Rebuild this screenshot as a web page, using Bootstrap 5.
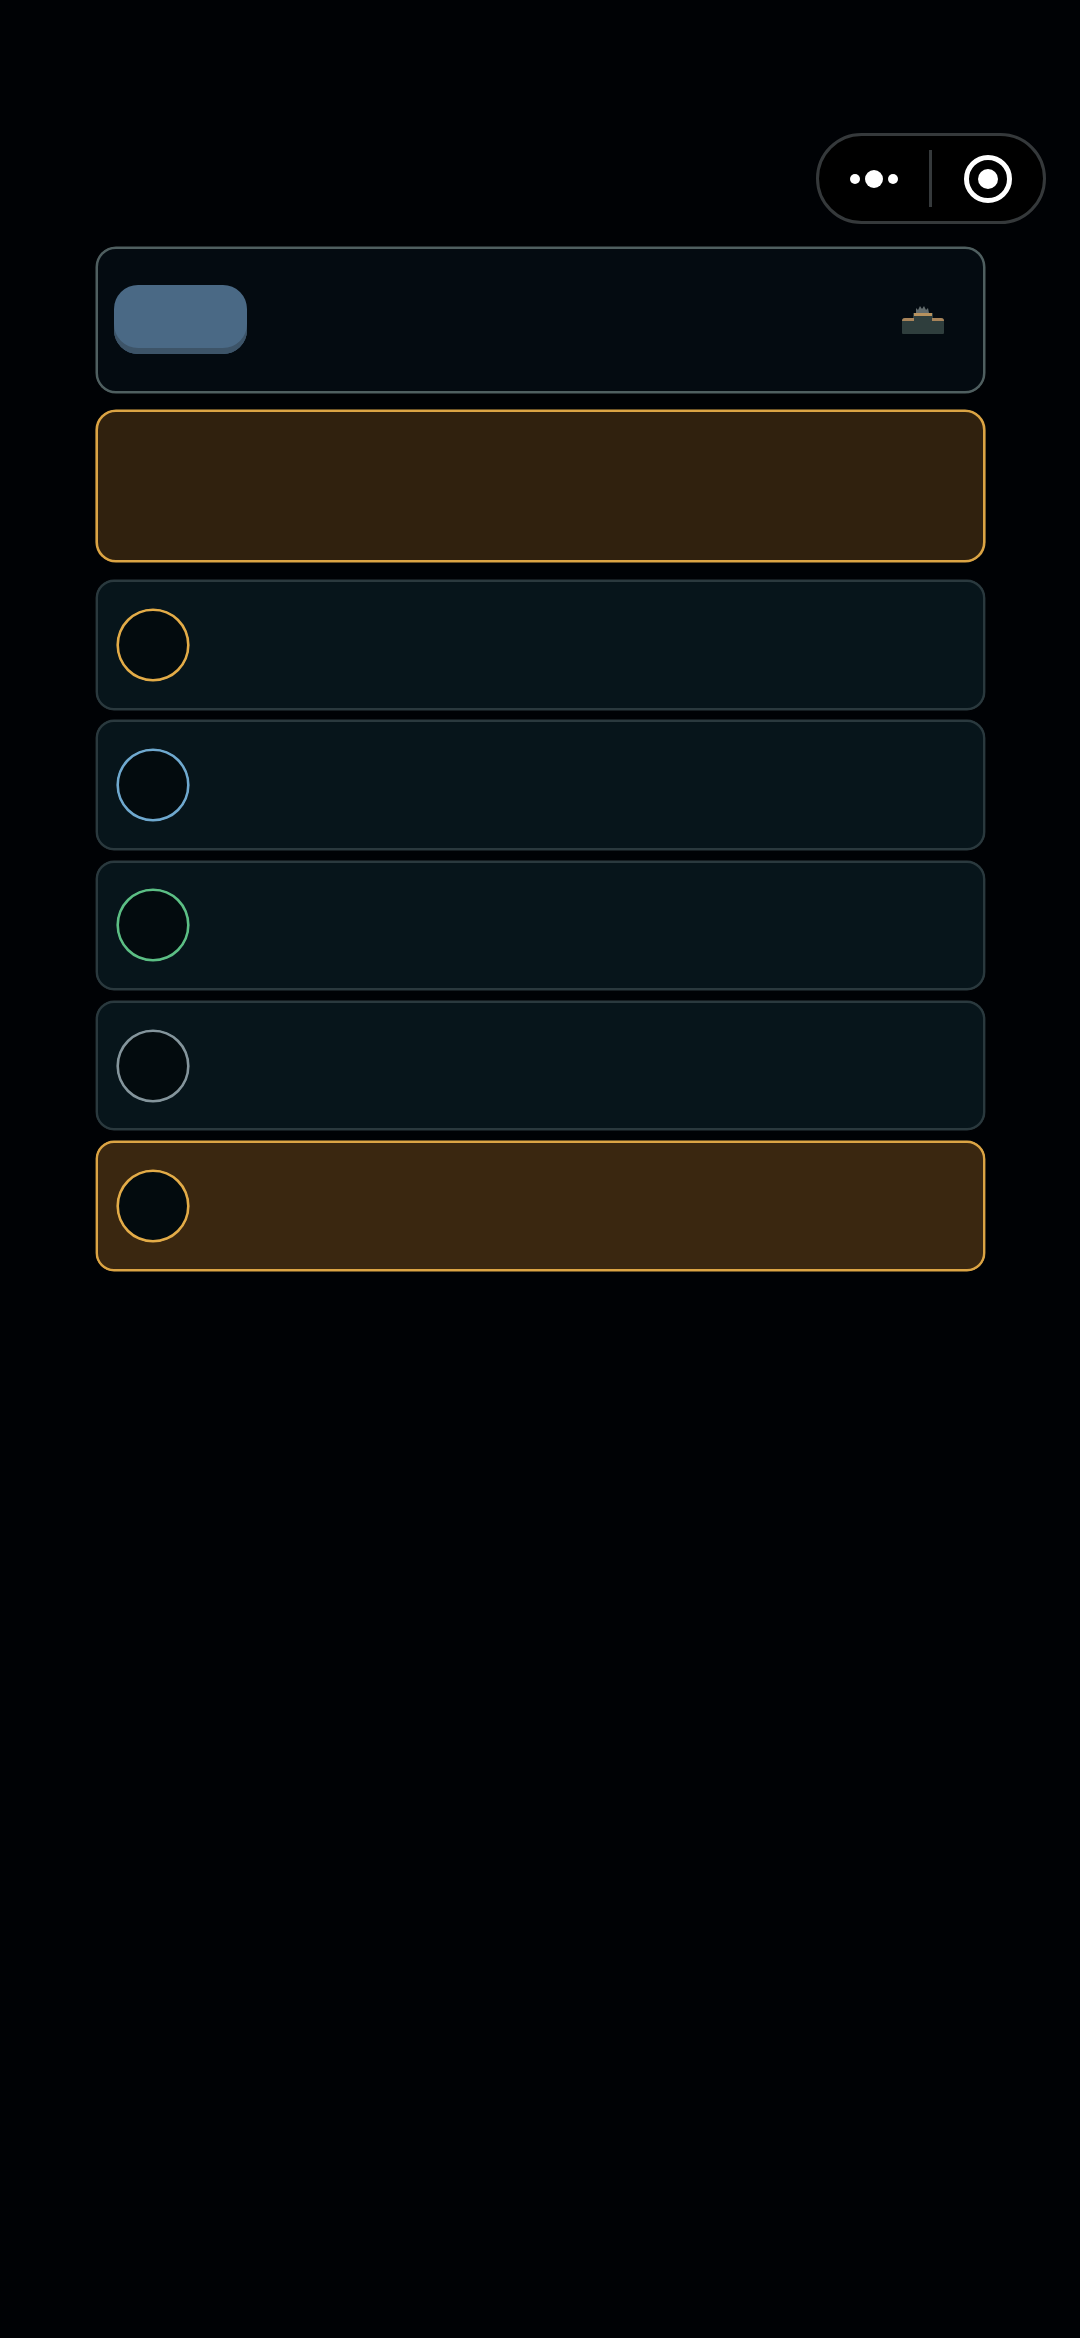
<!DOCTYPE html>
<html lang="en">
<head>
<meta charset="utf-8">
<title>Menu</title>
<link rel="stylesheet" href="https://cdn.jsdelivr.net/npm/bootstrap@5.3.0/dist/css/bootstrap.min.css">
<style>
html, body { background: #000205; }
.screen { width: 1080px; min-height: 2338px; padding-top: 133px; }
.capsule { width: 230px; height: 91px; margin-left: 816px; border: 3px solid #35393b; border-radius: 45.5px; background: #000; }
.capsule-side { width: 110px; }
.dot { background: #fff; border-radius: 50%; width: 10px; height: 10px; }
.dot-big { width: 18px; height: 18px; margin: 0 5px; }
.capsule-rule { width: 3px; height: 57px; background: #35393b; }
.ring { width: 48px; height: 48px; border: 5px solid #fff; border-radius: 50%; }
.ring-core { width: 20px; height: 20px; background: #fff; border-radius: 50%; }
.stack { width: 889px; margin-left: 96px; }
.head-card { height: 145.500px; margin-top: 23px; padding: 0 39px 0 16px; background: #040b11; border: 2px solid #4f5f60; border-radius: 20px; box-shadow: 0 0 0 .5px #4f5f60; }
.head-pill { width: 133px; height: 69px; background: #4a6985; border-radius: 24px; box-shadow: inset 0 -6px 0 #3d5468; }
.head-icon { width: 42px; height: 28px; filter: blur(.7px); }
.notice { height: 152px; margin-top: 17.500px; margin-bottom: 18px; background: #30210e; border: 2px solid #dba444; border-radius: 20px; box-shadow: 0 0 0 .6px #dba444; }
.entry { height: 129.500px; padding-left: 18px; background: #07151b; border: 2px solid #2a393e; border-radius: 18px; box-shadow: 0 0 0 .4px #2a393e; }
.entry-hot { background: #3a2710; border-color: #dba444; box-shadow: 0 0 0 .4px #dba444; }
.disc { width: 72px; height: 72px; margin-left: .5px; background: #030b0e; border: 2px solid currentColor; border-radius: 50%; box-shadow: 0 0 0 .6px currentColor; }
.disc-gold { color: #e3ac48; }
.disc-blue { color: #6fa9cf; }
.disc-green { color: #5cbf85; }
.disc-grey { color: #84959c; }
.entries { gap: 10.750px; }
</style>
</head>
<body>
<div class="screen">
  <div class="capsule d-flex align-items-center">
    <div class="capsule-side d-flex justify-content-center align-items-center">
      <span class="dot"></span><span class="dot dot-big"></span><span class="dot"></span>
    </div>
    <span class="capsule-rule"></span>
    <div class="flex-grow-1 d-flex justify-content-center align-items-center">
      <span class="ring d-flex justify-content-center align-items-center"><span class="ring-core"></span></span>
    </div>
  </div>
  <div class="stack">
    <div class="head-card d-flex justify-content-between align-items-center">
      <div class="head-pill"></div>
      <svg class="head-icon" viewBox="0 0 42 28" aria-hidden="true">
        <path d="M0 15q0-3 3-3h8V7h20v5h8q3 0 3 3v12q0 1-1 1H1q-1 0-1-1z" fill="#2f3e3d"/>
        <path d="M0 15q0-3 3-3h9v3zM42 15q0-3-3-3h-9v3z" fill="#a8845a"/>
        <rect x="12" y="7" width="18" height="3" fill="#b8925e"/>
        <path d="M14 7V2l2 2 2-4 2 3 2-3 2 4 2-2 1 5z" fill="#626b6c"/>
      </svg>
    </div>
    <div class="notice"></div>
    <div class="entries d-flex flex-column">
      <div class="entry d-flex align-items-center"><span class="disc disc-gold"></span></div>
      <div class="entry d-flex align-items-center"><span class="disc disc-blue"></span></div>
      <div class="entry d-flex align-items-center"><span class="disc disc-green"></span></div>
      <div class="entry d-flex align-items-center"><span class="disc disc-grey"></span></div>
      <div class="entry entry-hot d-flex align-items-center"><span class="disc disc-gold"></span></div>
    </div>
  </div>
</div>
<script src="https://cdn.jsdelivr.net/npm/bootstrap@5.3.0/dist/js/bootstrap.bundle.min.js"></script>
</body>
</html>
